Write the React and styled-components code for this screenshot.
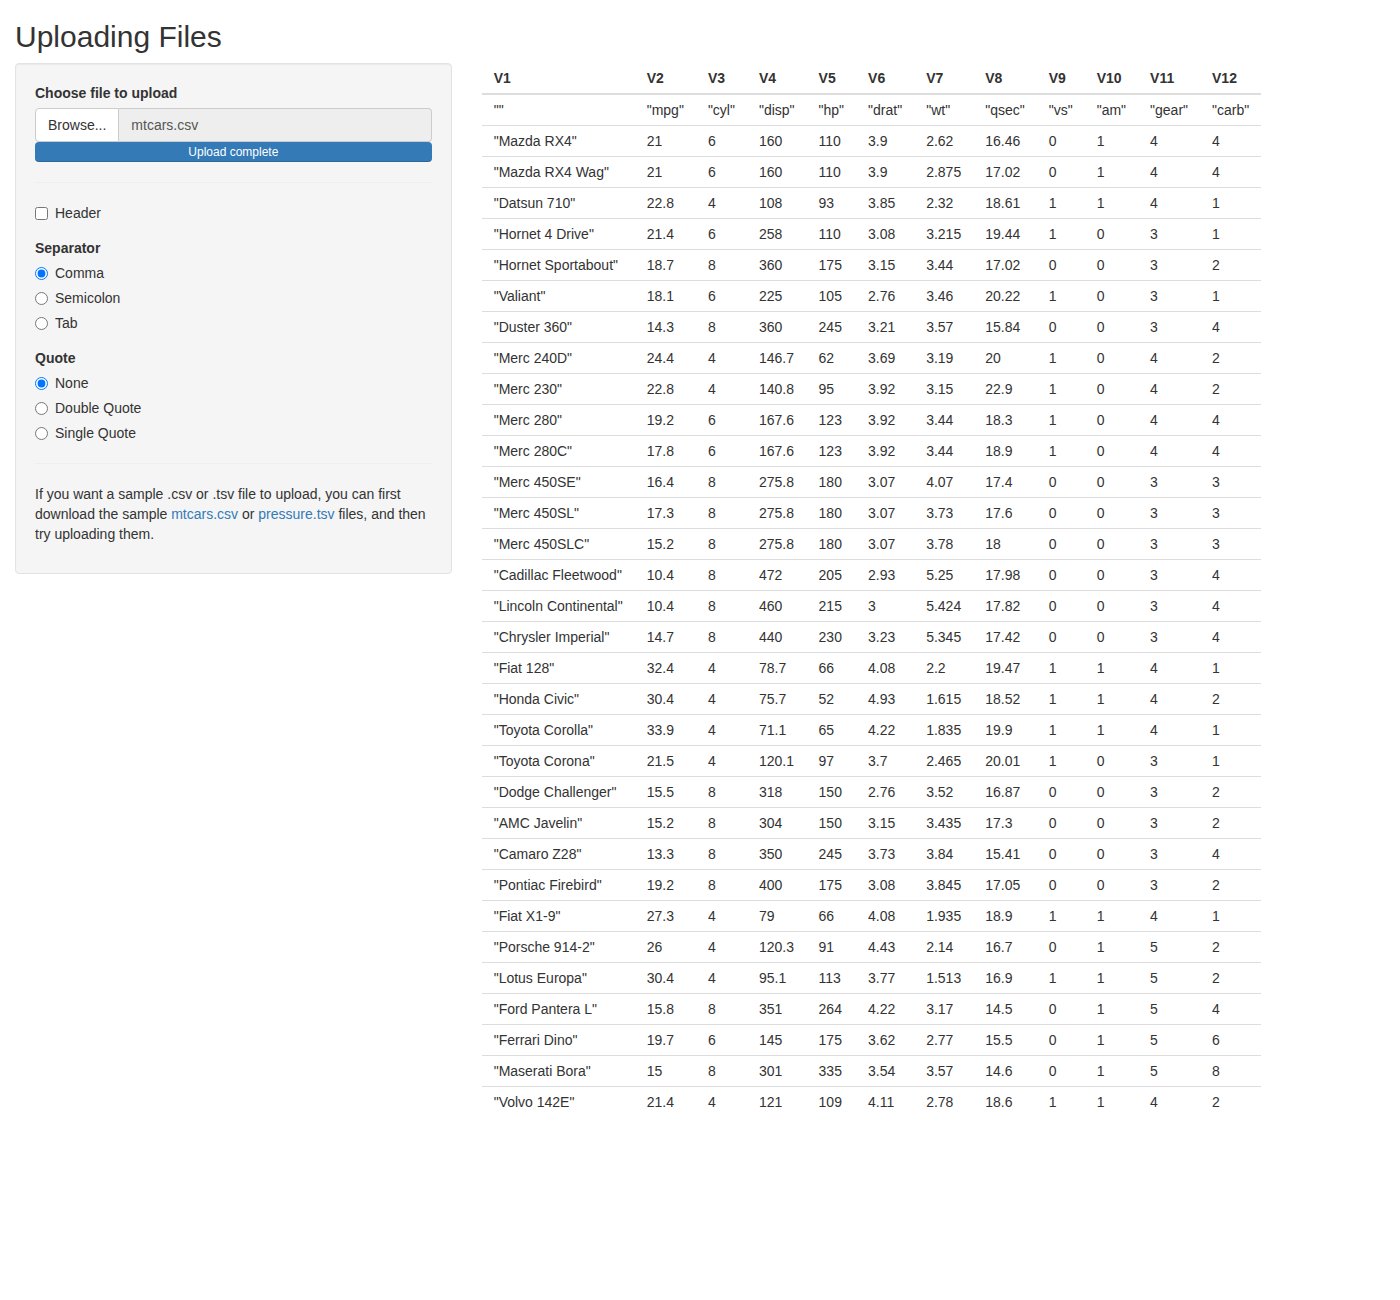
import React from "react";
import styled, { createGlobalStyle } from "styled-components";

const Global = createGlobalStyle`
  html, body { margin: 0; padding: 0; background: #fff; }
  body {
    font-family: "Liberation Sans", Arial, Helvetica, sans-serif;
    font-size: 14px;
    line-height: 20px;
    color: #333;
  }
  * { box-sizing: border-box; }
`;

const Page = styled.div`
  padding: 0 15px;
`;

const Title = styled.h2`
  margin: 20px 0 10px;
  font-size: 30px;
  font-weight: 500;
  line-height: 33px;
  color: #333;
`;

const Row = styled.div`
  display: flex;
  margin: 0 -15px;
  align-items: flex-start;
`;

const Col = styled.div`
  width: ${(p) => p.$w};
  padding: 0 15px;
`;

const Well = styled.div`
  background: #f5f5f5;
  border: 1px solid #e3e3e3;
  border-radius: 4px;
  box-shadow: inset 0 1px 1px rgba(0, 0, 0, 0.05);
  padding: 19px;
  margin-bottom: 20px;
`;

const Group = styled.div`
  display: flex;
  flex-direction: column;
  margin-bottom: ${(p) => p.$mb || "15px"};
`;

const Label = styled.div`
  font-weight: bold;
  line-height: 20px;
  margin-bottom: 5px;
`;

const InputGroup = styled.div`
  display: flex;
  height: 34px;
`;

const BrowseBtn = styled.span`
  display: flex;
  align-items: center;
  padding: 6px 12px;
  background: #fff;
  border: 1px solid #ccc;
  border-radius: 4px 0 0 4px;
  color: #333;
  white-space: nowrap;
`;

const FileName = styled.span`
  flex: 1;
  display: flex;
  align-items: center;
  padding: 6px 12px;
  background: #eee;
  border: 1px solid #ccc;
  border-left: none;
  border-radius: 0 4px 4px 0;
  color: #555;
`;

const Progress = styled.div`
  height: 20px;
  border-radius: 4px;
  background: #337ab7;
  color: #fff;
  font-size: 12px;
  line-height: 20px;
  text-align: center;
  box-shadow: inset 0 -1px 0 rgba(0, 0, 0, 0.15);
`;

const Hr = styled.hr`
  margin: 20px 0;
  border: 0;
  border-top: 1px solid #eee;
  height: 0;
`;

const Option = styled.label`
  display: flex;
  align-items: center;
  gap: 7px;
  height: 20px;
  margin-bottom: ${(p) => (p.$last ? "0" : "5px")};
  font-weight: normal;
  cursor: pointer;

  input {
    margin: 0;
    width: 13px;
    height: 13px;
  }
`;

const Help = styled.p`
  margin: 0 0 10px;
`;

const Link = styled.a`
  color: #337ab7;
  text-decoration: none;
`;

const Table = styled.table`
  border-collapse: collapse;
  border-spacing: 0;
  margin-bottom: 20px;
`;

const Th = styled.th`
  text-align: left;
  font-weight: bold;
  padding: 5px 12px;
  line-height: 20px;
  border-bottom: 2px solid #ddd;
  white-space: nowrap;
`;

const Td = styled.td`
  padding: 5px 12px;
  line-height: 20px;
  border-top: 1px solid #ddd;
  white-space: nowrap;
  vertical-align: top;
`;

const raw = `Mazda RX4|21|6|160|110|3.9|2.62|16.46|0|1|4|4
Mazda RX4 Wag|21|6|160|110|3.9|2.875|17.02|0|1|4|4
Datsun 710|22.8|4|108|93|3.85|2.32|18.61|1|1|4|1
Hornet 4 Drive|21.4|6|258|110|3.08|3.215|19.44|1|0|3|1
Hornet Sportabout|18.7|8|360|175|3.15|3.44|17.02|0|0|3|2
Valiant|18.1|6|225|105|2.76|3.46|20.22|1|0|3|1
Duster 360|14.3|8|360|245|3.21|3.57|15.84|0|0|3|4
Merc 240D|24.4|4|146.7|62|3.69|3.19|20|1|0|4|2
Merc 230|22.8|4|140.8|95|3.92|3.15|22.9|1|0|4|2
Merc 280|19.2|6|167.6|123|3.92|3.44|18.3|1|0|4|4
Merc 280C|17.8|6|167.6|123|3.92|3.44|18.9|1|0|4|4
Merc 450SE|16.4|8|275.8|180|3.07|4.07|17.4|0|0|3|3
Merc 450SL|17.3|8|275.8|180|3.07|3.73|17.6|0|0|3|3
Merc 450SLC|15.2|8|275.8|180|3.07|3.78|18|0|0|3|3
Cadillac Fleetwood|10.4|8|472|205|2.93|5.25|17.98|0|0|3|4
Lincoln Continental|10.4|8|460|215|3|5.424|17.82|0|0|3|4
Chrysler Imperial|14.7|8|440|230|3.23|5.345|17.42|0|0|3|4
Fiat 128|32.4|4|78.7|66|4.08|2.2|19.47|1|1|4|1
Honda Civic|30.4|4|75.7|52|4.93|1.615|18.52|1|1|4|2
Toyota Corolla|33.9|4|71.1|65|4.22|1.835|19.9|1|1|4|1
Toyota Corona|21.5|4|120.1|97|3.7|2.465|20.01|1|0|3|1
Dodge Challenger|15.5|8|318|150|2.76|3.52|16.87|0|0|3|2
AMC Javelin|15.2|8|304|150|3.15|3.435|17.3|0|0|3|2
Camaro Z28|13.3|8|350|245|3.73|3.84|15.41|0|0|3|4
Pontiac Firebird|19.2|8|400|175|3.08|3.845|17.05|0|0|3|2
Fiat X1-9|27.3|4|79|66|4.08|1.935|18.9|1|1|4|1
Porsche 914-2|26|4|120.3|91|4.43|2.14|16.7|0|1|5|2
Lotus Europa|30.4|4|95.1|113|3.77|1.513|16.9|1|1|5|2
Ford Pantera L|15.8|8|351|264|4.22|3.17|14.5|0|1|5|4
Ferrari Dino|19.7|6|145|175|3.62|2.77|15.5|0|1|5|6
Maserati Bora|15|8|301|335|3.54|3.57|14.6|0|1|5|8
Volvo 142E|21.4|4|121|109|4.11|2.78|18.6|1|1|4|2`;

const headRow = ['""', '"mpg"', '"cyl"', '"disp"', '"hp"', '"drat"', '"wt"', '"qsec"', '"vs"', '"am"', '"gear"', '"carb"'];
const rows = [
  headRow,
  ...raw.split("\n").map((line) => {
    const cells = line.split("|");
    cells[0] = `"${cells[0]}"`;
    return cells;
  }),
];
const cols = Array.from({ length: 12 }, (_, i) => `V${i + 1}`);

export default function App() {
  return (
    <Page>
      <Global />
      <Title>Uploading Files</Title>
      <Row>
        <Col $w="33.3333%">
          <Well>
            <Group $mb="20px">
              <Label>Choose file to upload</Label>
              <InputGroup>
                <BrowseBtn>Browse...</BrowseBtn>
                <FileName>mtcars.csv</FileName>
              </InputGroup>
              <Progress>Upload complete</Progress>
            </Group>
            <Hr />
            <Group>
              <Option $last>
                <input type="checkbox" />
                Header
              </Option>
            </Group>
            <Group>
              <Label>Separator</Label>
              <Option>
                <input type="radio" name="sep" defaultChecked />
                Comma
              </Option>
              <Option>
                <input type="radio" name="sep" />
                Semicolon
              </Option>
              <Option $last>
                <input type="radio" name="sep" />
                Tab
              </Option>
            </Group>
            <Group $mb="0">
              <Label>Quote</Label>
              <Option>
                <input type="radio" name="quote" defaultChecked />
                None
              </Option>
              <Option>
                <input type="radio" name="quote" />
                Double Quote
              </Option>
              <Option $last>
                <input type="radio" name="quote" />
                Single Quote
              </Option>
            </Group>
            <Hr />
            <Help>
              If you want a sample .csv or .tsv file to upload, you can first download the sample{" "}
              <Link href="#">mtcars.csv</Link> or <Link href="#">pressure.tsv</Link> files, and then
              try uploading them.
            </Help>
          </Well>
        </Col>
        <Col $w="66.6667%">
          <Table>
            <thead>
              <tr>
                {cols.map((c) => (
                  <Th key={c}>{c}</Th>
                ))}
              </tr>
            </thead>
            <tbody>
              {rows.map((r, i) => (
                <tr key={i}>
                  {r.map((c, j) => (
                    <Td key={j}>{c}</Td>
                  ))}
                </tr>
              ))}
            </tbody>
          </Table>
        </Col>
      </Row>
    </Page>
  );
}
